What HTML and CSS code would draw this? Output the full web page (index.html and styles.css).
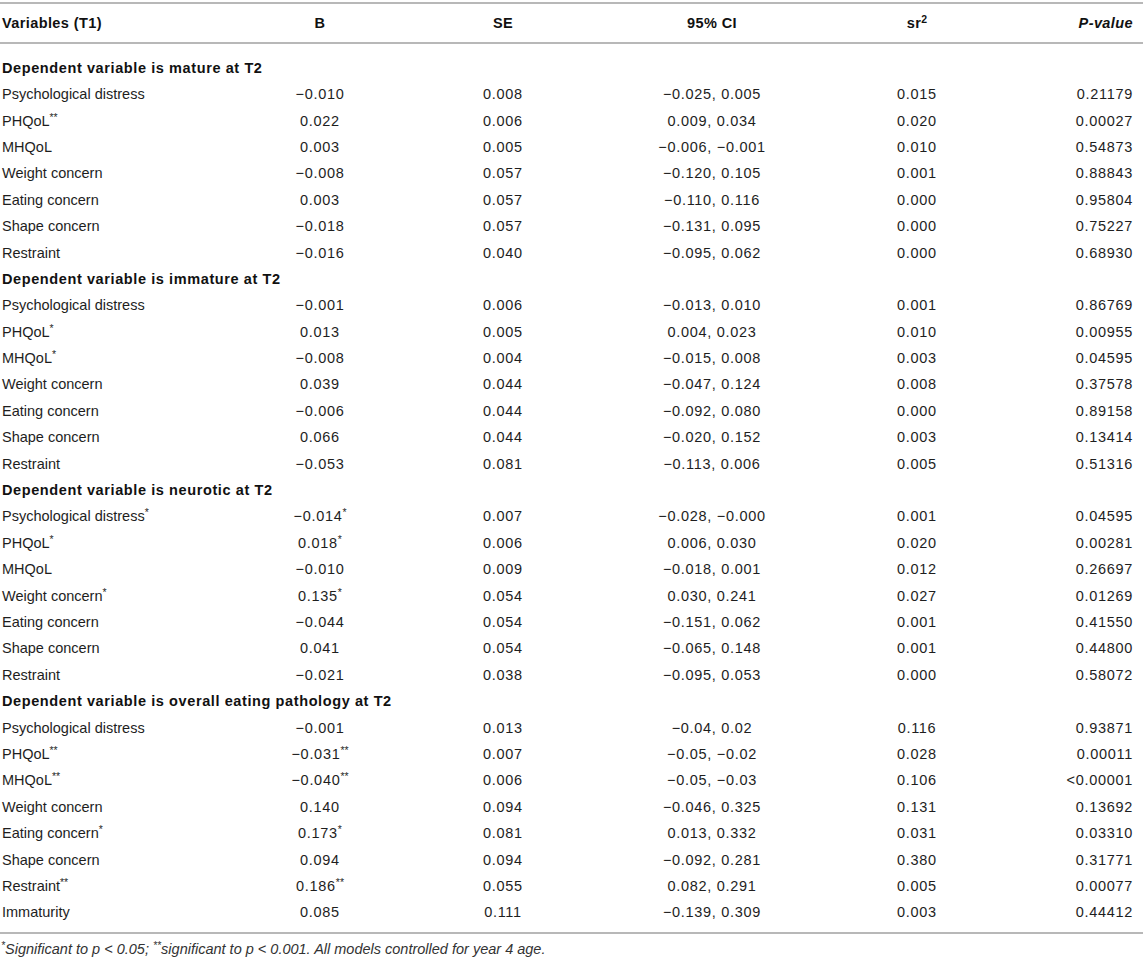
FILE: index.html
```html
<!DOCTYPE html>
<html lang="en">
<head>
    <meta charset="UTF-8">
    <meta name="viewport" content="width=device-width, initial-scale=1.0">
    <title>Regression results</title>
    <link rel="stylesheet" href="styles.css">
</head>
<body>
    <table class="results">
        <colgroup>
            <col class="col-var">
            <col class="col-b">
            <col class="col-se">
            <col class="col-ci">
            <col class="col-sr">
            <col class="col-p">
        </colgroup>
        <thead>
            <tr>
                <th>Variables (T1)</th>
                <th>B</th>
                <th>SE</th>
                <th>95% CI</th>
                <th>sr<sup>2</sup></th>
                <th class="pval"><em>P-value</em></th>
            </tr>
        </thead>
        <tbody>
            <tr class="section first"><td colspan="6">Dependent variable is mature at T2</td></tr>
            <tr><td>Psychological distress</td><td>−0.010</td><td>0.008</td><td>−0.025, 0.005</td><td>0.015</td><td>0.21179</td></tr>
            <tr><td>PHQoL<sup>**</sup></td><td>0.022</td><td>0.006</td><td>0.009, 0.034</td><td>0.020</td><td>0.00027</td></tr>
            <tr><td>MHQoL</td><td>0.003</td><td>0.005</td><td>−0.006, −0.001</td><td>0.010</td><td>0.54873</td></tr>
            <tr><td>Weight concern</td><td>−0.008</td><td>0.057</td><td>−0.120, 0.105</td><td>0.001</td><td>0.88843</td></tr>
            <tr><td>Eating concern</td><td>0.003</td><td>0.057</td><td>−0.110, 0.116</td><td>0.000</td><td>0.95804</td></tr>
            <tr><td>Shape concern</td><td>−0.018</td><td>0.057</td><td>−0.131, 0.095</td><td>0.000</td><td>0.75227</td></tr>
            <tr><td>Restraint</td><td>−0.016</td><td>0.040</td><td>−0.095, 0.062</td><td>0.000</td><td>0.68930</td></tr>

            <tr class="section"><td colspan="6">Dependent variable is immature at T2</td></tr>
            <tr><td>Psychological distress</td><td>−0.001</td><td>0.006</td><td>−0.013, 0.010</td><td>0.001</td><td>0.86769</td></tr>
            <tr><td>PHQoL<sup>*</sup></td><td>0.013</td><td>0.005</td><td>0.004, 0.023</td><td>0.010</td><td>0.00955</td></tr>
            <tr><td>MHQoL<sup>*</sup></td><td>−0.008</td><td>0.004</td><td>−0.015, 0.008</td><td>0.003</td><td>0.04595</td></tr>
            <tr><td>Weight concern</td><td>0.039</td><td>0.044</td><td>−0.047, 0.124</td><td>0.008</td><td>0.37578</td></tr>
            <tr><td>Eating concern</td><td>−0.006</td><td>0.044</td><td>−0.092, 0.080</td><td>0.000</td><td>0.89158</td></tr>
            <tr><td>Shape concern</td><td>0.066</td><td>0.044</td><td>−0.020, 0.152</td><td>0.003</td><td>0.13414</td></tr>
            <tr><td>Restraint</td><td>−0.053</td><td>0.081</td><td>−0.113, 0.006</td><td>0.005</td><td>0.51316</td></tr>

            <tr class="section"><td colspan="6">Dependent variable is neurotic at T2</td></tr>
            <tr><td>Psychological distress<sup>*</sup></td><td>−0.014<sup>*</sup></td><td>0.007</td><td>−0.028, −0.000</td><td>0.001</td><td>0.04595</td></tr>
            <tr><td>PHQoL<sup>*</sup></td><td>0.018<sup>*</sup></td><td>0.006</td><td>0.006, 0.030</td><td>0.020</td><td>0.00281</td></tr>
            <tr><td>MHQoL</td><td>−0.010</td><td>0.009</td><td>−0.018, 0.001</td><td>0.012</td><td>0.26697</td></tr>
            <tr><td>Weight concern<sup>*</sup></td><td>0.135<sup>*</sup></td><td>0.054</td><td>0.030, 0.241</td><td>0.027</td><td>0.01269</td></tr>
            <tr><td>Eating concern</td><td>−0.044</td><td>0.054</td><td>−0.151, 0.062</td><td>0.001</td><td>0.41550</td></tr>
            <tr><td>Shape concern</td><td>0.041</td><td>0.054</td><td>−0.065, 0.148</td><td>0.001</td><td>0.44800</td></tr>
            <tr><td>Restraint</td><td>−0.021</td><td>0.038</td><td>−0.095, 0.053</td><td>0.000</td><td>0.58072</td></tr>

            <tr class="section"><td colspan="6">Dependent variable is overall eating pathology at T2</td></tr>
            <tr><td>Psychological distress</td><td>−0.001</td><td>0.013</td><td>−0.04, 0.02</td><td>0.116</td><td>0.93871</td></tr>
            <tr><td>PHQoL<sup>**</sup></td><td>−0.031<sup>**</sup></td><td>0.007</td><td>−0.05, −0.02</td><td>0.028</td><td>0.00011</td></tr>
            <tr><td>MHQoL<sup>**</sup></td><td>−0.040<sup>**</sup></td><td>0.006</td><td>−0.05, −0.03</td><td>0.106</td><td>&lt;0.00001</td></tr>
            <tr><td>Weight concern</td><td>0.140</td><td>0.094</td><td>−0.046, 0.325</td><td>0.131</td><td>0.13692</td></tr>
            <tr><td>Eating concern<sup>*</sup></td><td>0.173<sup>*</sup></td><td>0.081</td><td>0.013, 0.332</td><td>0.031</td><td>0.03310</td></tr>
            <tr><td>Shape concern</td><td>0.094</td><td>0.094</td><td>−0.092, 0.281</td><td>0.380</td><td>0.31771</td></tr>
            <tr><td>Restraint<sup>**</sup></td><td>0.186<sup>**</sup></td><td>0.055</td><td>0.082, 0.291</td><td>0.005</td><td>0.00077</td></tr>
            <tr class="last"><td>Immaturity</td><td>0.085</td><td>0.111</td><td>−0.139, 0.309</td><td>0.003</td><td>0.44412</td></tr>
        </tbody>
    </table>

    <p class="footnote"><sup>*</sup>Significant to p &lt; 0.05; <sup>**</sup>significant to p &lt; 0.001. All models controlled for year 4 age.</p>
</body>
</html>
```

FILE: styles.css
```css
* {
    margin: 0;
    padding: 0;
    box-sizing: border-box;
}

body {
    font-family: "Liberation Sans", Arial, sans-serif;
    font-size: 14.5px;
    color: #1e1e1e;
    background: #fff;
    padding-top: 2px;
}

.results {
    width: 100%;
    border-collapse: collapse;
    table-layout: fixed;
    border-top: 2px solid #b8b8b8;
    border-bottom: 2px solid #b8b8b8;
}

.col-var { width: 240px; }
.col-b { width: 160px; }
.col-se { width: 206px; }
.col-ci { width: 212px; }
.col-sr { width: 198px; }
.col-p { width: 127px; }

.results th {
    height: 40px;
    font-weight: bold;
    color: #111;
    text-align: center;
    letter-spacing: 0.4px;
    border-bottom: 2px solid #b8b8b8;
}

.results th:first-child {
    text-align: left;
    padding-left: 2px;
}

.results th.pval {
    text-align: right;
    padding-right: 10px;
}

.results td {
    height: 26.4px;
    text-align: center;
    white-space: nowrap;
    vertical-align: middle;
    letter-spacing: 0.7px;
}

.results td:first-child {
    text-align: left;
    padding-left: 2px;
    letter-spacing: 0;
}

.results td:last-child {
    text-align: right;
    padding-right: 10px;
}

.results .section td {
    font-weight: bold;
    color: #111;
    text-align: left;
    padding-left: 2px;
    letter-spacing: 0.6px;
}

.results .section.first td {
    height: 38px;
    padding-top: 11px;
}

.results .last td {
    height: 34px;
    padding-bottom: 8px;
}

sup {
    font-size: 0.72em;
    line-height: 0;
    vertical-align: 0.5em;
    letter-spacing: 0;
}

.footnote {
    font-style: italic;
    font-size: 14.5px;
    color: #333;
    padding: 7px 0 0 1px;
}
```
